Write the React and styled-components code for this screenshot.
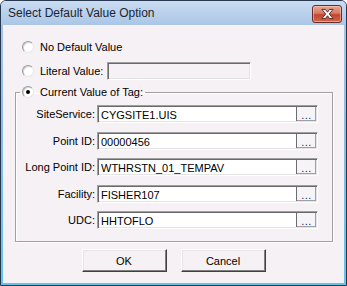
import React from "react";
import styled, { createGlobalStyle } from "styled-components";

const Global = createGlobalStyle`
    html, body {
        margin: 0;
        padding: 0;
        background: #ffffff;
    }
    * {
        box-sizing: border-box;
    }
`

const Window = styled.div`
    width: 347px;
    height: 286px;
    border: 1px solid #25384f;
    border-radius: 6px 6px 0 0;
    background: linear-gradient(to bottom, #c3d8ef 0px, #a8c4e5 24px, #8dbde4 120px, #5fc6ea 100%);
    display: flex;
    flex-direction: column;
    font-family: "Liberation Sans", Arial, sans-serif;
    overflow: hidden;
`

const TitleBar = styled.div`
    height: 24px;
    display: flex;
    align-items: flex-start;
    justify-content: space-between;
    padding: 0 4px 0 7px;
    background: linear-gradient(to bottom, #cadcf1, #aac6e6);
`

const Title = styled.span`
    font-size: 12px;
    color: #1b2433;
    line-height: 24px;
`

const CloseButton = styled.div`
    margin-top: 4px;
    width: 30px;
    height: 18px;
    border: 1px solid #6b2a25;
    border-radius: 3px;
    background: linear-gradient(to bottom, #e9a592 0%, #d77a64 45%, #c2452f 55%, #d0664c 100%);
    box-shadow: inset 0 0 0 1px rgba(255, 220, 210, 0.5);
    display: flex;
    align-items: center;
    justify-content: center;
`

const Client = styled.div`
    flex: 1;
    margin: 0 2px 2px 2px;
    background: #f5f1f5;
    display: flex;
    flex-direction: column;
    padding-top: 13px;
`

const RadioRow = styled.label`
    height: 18px;
    display: flex;
    align-items: center;
    margin-left: 19px;
    margin-bottom: ${p => p.$gap || 0}px;
    font-size: 11px;
    color: #000;
`

const RadioDot = styled.span`
    width: 12px;
    height: 12px;
    border-radius: 50%;
    background: #ffffff;
    border: 1px solid;
    border-color: #9a9a9a #e8e8e8 #e8e8e8 #9a9a9a;
    box-shadow: inset 1px 1px 0 #d6d6d6;
    margin-right: 6px;
    display: flex;
    align-items: center;
    justify-content: center;
    flex-shrink: 0;

    &::after {
        content: "";
        width: 4px;
        height: 4px;
        border-radius: 50%;
        background: ${p => (p.$checked ? "#000" : "transparent")};
    }
`

const Sunken = styled.div`
    height: 18px;
    display: flex;
    border: 1px solid;
    border-color: #a0a0a0 #ffffff #ffffff #a0a0a0;
    box-shadow: inset 1px 1px 0 #696969, inset -1px -1px 0 #e3e3e3;
    background: ${p => (p.$disabled ? "#f5f1f5" : "#ffffff")};
    width: ${p => p.$width}px;
`

const LiteralBox = styled(Sunken)`
    margin-left: 4px;
`

const InputText = styled.span`
    flex: 1;
    padding: 2px 0 0 3px;
    font-size: 11px;
    line-height: 14px;
    color: #000;
    white-space: nowrap;
    overflow: hidden;
`

const Browse = styled.div`
    width: 20px;
    margin: 1px 1px 1px 0;
    border-left: 1px solid #6d6d6d;
    background: #f7f4f7;
    box-shadow: inset -1px -1px 0 #a0a0a0;
    display: flex;
    align-items: flex-end;
    justify-content: center;
    font-size: 11px;
    line-height: 12px;
    color: #202060;
    letter-spacing: 0.5px;
`

const Group = styled.fieldset`
    margin: 3px 11px 0 12px;
    padding: 4px 13px 12px 4px;
    border: 1px solid #a0a0a0;
    box-shadow: 1px 1px 0 #ffffff, inset 1px 1px 0 #ffffff;
`

const Legend = styled.legend`
    padding: 0 2px;
    height: 18px;
    display: flex;
    align-items: center;
    font-size: 11px;
    color: #000;
`

const Fields = styled.div`
    display: grid;
    grid-template-columns: 75px 221px;
    column-gap: 2px;
    row-gap: 8.5px;
`

const FieldLabel = styled.span`
    font-size: 11px;
    color: #000;
    text-align: right;
    line-height: 18px;
    white-space: nowrap;
`

const ButtonRow = styled.div`
    display: flex;
    justify-content: center;
    gap: 14px;
    margin-top: 7px;
`

const PushButton = styled.div`
    width: 85px;
    height: 23px;
    border: 1px solid;
    border-color: #ffffff #404040 #404040 #ffffff;
    box-shadow: inset -1px -1px 0 #808080, inset 1px 1px 0 #e8e4e8;
    background: #f5f1f5;
    display: flex;
    align-items: center;
    justify-content: center;
    font-size: 11px;
    color: #000;
`

const fields = [
    { label: "SiteService:", value: "CYGSITE1.UIS" },
    { label: "Point ID:", value: "00000456" },
    { label: "Long Point ID:", value: "WTHRSTN_01_TEMPAV" },
    { label: "Facility:", value: "FISHER107" },
    { label: "UDC:", value: "HHTOFLO" },
]

function CloseIcon() {
    return (
        <svg width="15" height="12" viewBox="0 0 14 11">
            <path
                d="M1.8 1.2 L5 1.2 L7 3.8 L9 1.2 L12.2 1.2 L8.7 5.5 L12.2 9.8 L9 9.8 L7 7.2 L5 9.8 L1.8 9.8 L5.3 5.5 Z"
                fill="#ffffff"
                stroke="#5a2a28"
                strokeWidth="0.9"
                strokeLinejoin="round"
            />
        </svg>
    )
}

export default function App() {
    return (
        <>
            <Global />
            <Window>
                <TitleBar>
                    <Title>Select Default Value Option</Title>
                    <CloseButton>
                        <CloseIcon />
                    </CloseButton>
                </TitleBar>
                <Client>
                    <RadioRow $gap={6}>
                        <RadioDot />
                        No Default Value
                    </RadioRow>
                    <RadioRow>
                        <RadioDot />
                        Literal Value:
                        <LiteralBox $width={144} $disabled />
                    </RadioRow>
                    <Group>
                        <Legend>
                            <RadioDot $checked />
                            Current Value of Tag:
                        </Legend>
                        <Fields>
                            {fields.map(f => (
                                <React.Fragment key={f.label}>
                                    <FieldLabel>{f.label}</FieldLabel>
                                    <Sunken $width={221}>
                                        <InputText>{f.value}</InputText>
                                        <Browse>...</Browse>
                                    </Sunken>
                                </React.Fragment>
                            ))}
                        </Fields>
                    </Group>
                    <ButtonRow>
                        <PushButton>OK</PushButton>
                        <PushButton>Cancel</PushButton>
                    </ButtonRow>
                </Client>
            </Window>
        </>
    )
}
